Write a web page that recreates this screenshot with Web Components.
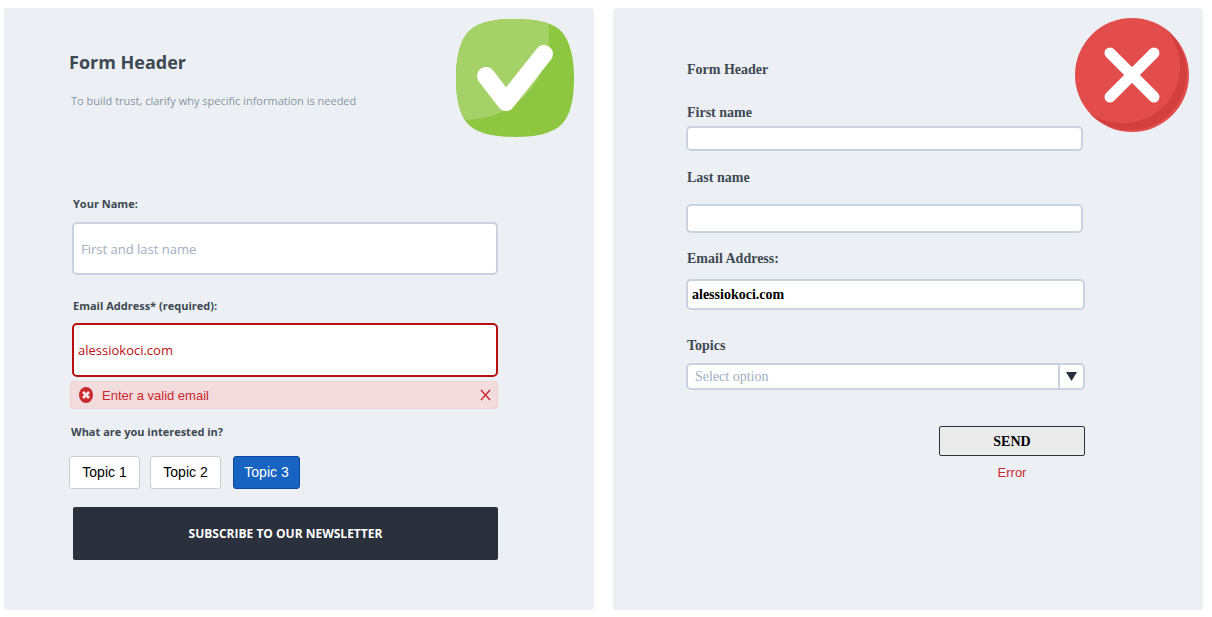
<!DOCTYPE html>
<html lang="en">
<head>
<meta charset="utf-8">
<title>Form comparison</title>
<style>
  body { margin: 0; background: #fff; font-family: "Open Sans", sans-serif; color: #3d4852; }
</style>
</head>
<body>
<form-comparison></form-comparison>

<template id="t-comparison">
  <style>
    :host { display: grid; grid-template-columns: 1fr 1fr; gap: 19px; padding: 8px 9px 7px 4px; }
  </style>
  <form-panel><good-form></good-form><check-badge slot="badge"></check-badge></form-panel>
  <form-panel><bad-form></bad-form><cross-badge slot="badge"></cross-badge></form-panel>
</template>

<template id="t-panel">
  <style>
    :host { display: block; position: relative; background: #ecf0f5; border-radius: 3px; }
    ::slotted([slot="badge"]) { position: absolute; }
  </style>
  <slot></slot>
  <slot name="badge"></slot>
</template>

<template id="t-check">
  <style>
    :host { display: block; top: 11px; right: 20px; width: 118px; height: 118px; }
    svg { display: block; width: 100%; height: 100%; }
  </style>
  <svg viewBox="0 0 118 118" role="img" aria-label="Good example">
    <defs><clipPath id="c"><path d="M59 0C82 0 98 4 106 13C114 23 118 38 118 59C118 82 114 96 106 105C97 114 82 118 59 118C36 118 21 114 12 105C4 96 0 82 0 59C0 38 4 22 12 13C21 4 36 0 59 0Z"/></clipPath></defs>
    <g clip-path="url(#c)">
      <path fill="#8dc641" d="M0 0H118V118H0Z"/>
      <path fill="#a4d168" d="M0 0H92Q93 5 93 16C93 65 57 101 8 101H0Z"/>
    </g>
    <path d="M30 57L50 83L88 35" fill="none" stroke="#fff" stroke-width="18" stroke-linecap="round" stroke-linejoin="round"/>
  </svg>
</template>

<template id="t-cross">
  <style>
    :host { display: block; top: 10px; right: 14px; width: 114px; height: 114px; }
    svg { display: block; width: 100%; height: 100%; }
  </style>
  <svg viewBox="0 0 114 114" role="img" aria-label="Bad example">
    <circle cx="57" cy="57" r="57" fill="#e24c4b"/>
    <path fill="#d1403f" d="M92 12A57 57 0 1 1 15 96C25 102 36 105 49 105C80 105 105 80 105 49C105 35 100 23 92 12Z"/>
    <path d="M35 35L79 79M79 35L35 79" fill="none" stroke="#fff" stroke-width="11" stroke-linecap="round"/>
  </svg>
</template>

<template id="t-field">
  <style>
    :host { display: block; }
    label { display: block; font-weight: 700; font-size: var(--label-size, 11px); line-height: 16px; margin: 0 0 var(--label-gap, 10px) 1px; }
    input { display: block; box-sizing: border-box; width: 100%; height: var(--field-height, 53px); margin: 0;
      padding: 0 var(--field-pad, 7px); border: 2px solid var(--field-border, #c8d3df); border-radius: 5px; background: #fff;
      font: inherit; font-size: var(--field-size, 13px); font-weight: var(--field-weight, 400); color: var(--field-color, #000); outline: none; }
    input::placeholder { color: #a0aec0; opacity: 1; }
  </style>
  <label for="i"></label>
  <input id="i">
</template>

<template id="t-select">
  <style>
    :host { display: block; }
    label { display: block; font-weight: 700; font-size: 14px; line-height: 16px; margin: 0 0 9px 1px; }
    .box { display: grid; grid-template-columns: 1fr 25px; height: 27px; box-sizing: border-box; border: 2px solid #c8d3df; border-radius: 5px; background: #fff; align-items: stretch; }
    select { grid-area: 1 / 1 / 2 / 3; appearance: none; border: 0; margin: 0; padding: 0 30px 0 7px; background: transparent; font: inherit; font-size: 14px; color: #a0aec0; outline: none; min-width: 0; }
    .arrow { grid-area: 1 / 2; display: flex; align-items: center; justify-content: center; border-left: 2px solid #c8d3df; pointer-events: none; }
  </style>
  <label for="s">Topics</label>
  <div class="box">
    <select id="s"><option>Select option</option></select>
    <span class="arrow"><svg width="11" height="9" viewBox="0 0 11 9"><path d="M0 0H11L5.5 9Z" fill="#2a313d"/></svg></span>
  </div>
</template>

<template id="t-alert">
  <style>
    :host { display: flex; align-items: center; box-sizing: border-box; height: 28px; padding: 0 6px 0 8px; border: 1px solid #f2d3d6; border-radius: 3px; background: #f2dcde; color: #c9282d; font: 13px/16px "Liberation Sans", sans-serif; }
    span { flex: 1; margin-left: 9px; padding-top: 1px; }
    button { display: block; padding: 0; border: 0; background: none; color: inherit; }
    svg { display: block; }
  </style>
  <svg width="14" height="16" viewBox="0 0 14 16"><ellipse cx="7" cy="8" rx="7" ry="8" fill="#c9282d"/><path d="M4 5L10 11M10 5L4 11" stroke="#f8e8e9" stroke-width="2.6"/></svg>
  <span role="alert"><slot></slot></span>
  <button type="button" aria-label="Dismiss"><svg width="11" height="12" viewBox="0 0 11 12"><path d="M1 1L10 11M10 1L1 11" stroke="currentColor" stroke-width="1.4" fill="none"/></svg></button>
</template>

<template id="t-topic">
  <style>
    :host { display: block; }
    button { display: block; box-sizing: border-box; width: 71px; height: 33px; padding: 0 0 1px; border: 1px solid #ccc; border-radius: 3px; background: #fff; color: #000; font: 14px/16px "Liberation Sans", sans-serif; white-space: nowrap; }
    button[aria-pressed="true"] { width: 67px; background: #1663c1; border-color: #0f479c; color: #fff; }
  </style>
  <button type="button"><slot></slot></button>
</template>

<template id="t-good">
  <style>
    :host { display: block; padding: 40px 96px 50px 65px; font-family: "Open Sans", sans-serif; }
    h2 { margin: 0; font-size: 18px; font-weight: 700; line-height: 28px; }
    p { margin: 17px 0 87px 2px; font-size: 11px; line-height: 16px; color: #8795a1; }
    text-field { margin: 0 0 23px 3px; }
    .invalid { margin-bottom: 4px; --label-gap: 9px; --field-height: 54px; --field-border: #b80f10; --field-color: #b80f10; --field-pad: 4px; }
    alert-bar { margin-left: 1px; }
    h3 { margin: 15px 0 16px 2px; font-size: 11px; font-weight: 700; line-height: 16px; }
    .topics { display: flex; gap: 10px; margin: 0 0 18px; }
    .topics :last-child { margin-left: 2px; }
    .submit { display: block; box-sizing: border-box; width: calc(100% - 4px); height: 53px; margin: 0 0 0 4px; padding: 0; border: 0; border-radius: 2px; background: #2a313d; color: #fff; font: 700 12px/16px "Open Sans", sans-serif; }
  </style>
  <h2>Form Header</h2>
  <p>To build trust, clarify why specific information is needed</p>
  <text-field label="Your Name:" placeholder="First and last name"></text-field>
  <text-field class="invalid" label="Email Address* (required):" value="alessiokoci.com"></text-field>
  <alert-bar>Enter a valid email</alert-bar>
  <h3>What are you interested in?</h3>
  <div class="topics">
    <topic-button>Topic 1</topic-button>
    <topic-button>Topic 2</topic-button>
    <topic-button pressed>Topic 3</topic-button>
  </div>
  <button class="submit" type="button">SUBSCRIBE TO OUR NEWSLETTER</button>
</template>

<template id="t-bad">
  <style>
    :host { display: block; padding: 54px 118px 50px 73px; font-family: "Liberation Serif", serif; --label-size: 14px; --field-size: 14px; --field-weight: 700; --field-pad: 4px; }
    h2 { margin: 0 0 27px 1px; font-size: 14px; font-weight: 700; line-height: 16px; }
    .first { margin: 0 2px 19px 0; --label-gap: 5px; --field-height: 25px; }
    .last { margin: 0 2px 18px 0; --label-gap: 18px; --field-height: 29px; }
    .email { margin-bottom: 28px; --label-gap: 12px; --field-height: 31px; }
    .send { display: flex; flex-direction: column; width: 146px; margin: 36px 0 0 auto; }
    button { height: 30px; box-sizing: border-box; padding: 1px 0 0; border: 1px solid #2a313d; border-radius: 2px; background: #ebebeb; color: #000; font: 700 14px/16px "Liberation Serif", serif; }
    .error { margin-top: 9px; text-align: center; color: #c9282d; font: 13px/16px "Liberation Sans", sans-serif; }
  </style>
  <h2>Form Header</h2>
  <text-field class="first" label="First name"></text-field>
  <text-field class="last" label="Last name"></text-field>
  <text-field class="email" label="Email Address:" value="alessiokoci.com"></text-field>
  <select-field></select-field>
  <div class="send">
    <button type="button">SEND</button>
    <span class="error">Error</span>
  </div>
</template>

<script>
  class TemplateElement extends HTMLElement {
    constructor() {
      super();
      const template = document.getElementById(this.constructor.template);
      this.attachShadow({ mode: 'open' }).append(document.importNode(template.content, true));
    }
  }
  const define = (name, template) =>
    customElements.define(name, class extends TemplateElement { static template = template; });

  customElements.define('text-field', class extends TemplateElement {
    static template = 't-field';
    connectedCallback() {
      const input = this.shadowRoot.querySelector('input');
      this.shadowRoot.querySelector('label').textContent = this.getAttribute('label');
      input.placeholder = this.getAttribute('placeholder') || '';
      input.value = this.getAttribute('value') || '';
    }
  });
  customElements.define('topic-button', class extends TemplateElement {
    static template = 't-topic';
    connectedCallback() {
      this.shadowRoot.querySelector('button').setAttribute('aria-pressed', this.hasAttribute('pressed'));
    }
  });
  define('select-field', 't-select');
  define('alert-bar', 't-alert');
  define('check-badge', 't-check');
  define('cross-badge', 't-cross');
  define('form-panel', 't-panel');
  define('good-form', 't-good');
  define('bad-form', 't-bad');
  define('form-comparison', 't-comparison');
</script>
</body>
</html>
